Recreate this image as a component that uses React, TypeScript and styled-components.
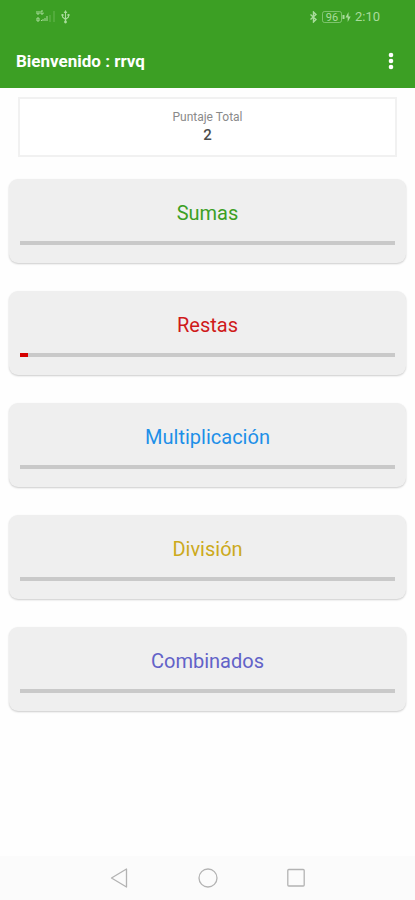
import React from 'react';
import styled, { createGlobalStyle } from 'styled-components';

const GlobalStyle = createGlobalStyle`
  *, *::before, *::after {
    box-sizing: border-box;
  }
  body {
    margin: 0;
    background: #fefefe;
    font-family: Roboto, "Liberation Sans", sans-serif;
  }
  h1, h2, p {
    margin: 0;
  }
`;

const Screen = styled.div`
  min-height: 100vh;
  display: flex;
  flex-direction: column;
`;

const Header = styled.header`
  background: #3c9f24;
  color: #ffffff;
`;

const StatusBar = styled.div`
  height: 34px;
  padding: 0 35px 0 36px;
  display: flex;
  align-items: center;
  justify-content: space-between;
  color: #a9dc9c;
`;

const StatusGroup = styled.div`
  display: flex;
  align-items: center;
  gap: 4px;
`;

const Clock = styled.time`
  font-size: 13px;
  line-height: 16px;
`;

const AppBar = styled.div`
  height: 54px;
  padding: 0 8px 0 16px;
  display: flex;
  align-items: center;
  justify-content: space-between;
`;

const Title = styled.h1`
  font-size: 17px;
  line-height: 24px;
  font-weight: 700;
`;

const IconButton = styled.button`
  width: 32px;
  height: 40px;
  padding: 0;
  border: 0;
  background: none;
  color: inherit;
  display: grid;
  place-items: center;
  cursor: pointer;
`;

const Main = styled.main`
  flex: 1;
  padding: 9px 9px 24px;
  display: flex;
  flex-direction: column;
  gap: 22px;
`;

const ScoreBox = styled.section`
  margin: 0 9px;
  padding: 10px 0;
  border: 2px solid #f1f1f1;
  background: #ffffff;
  text-align: center;
`;

const ScoreLabel = styled.p`
  font-size: 12px;
  line-height: 16px;
  color: #8a8a8a;
`;

const ScoreValue = styled.p`
  font-size: 15px;
  line-height: 20px;
  font-weight: 500;
  color: #4c4c4c;
`;

const CardList = styled.div`
  display: grid;
  gap: 28px;
`;

const Card = styled.a`
  display: flex;
  flex-direction: column;
  gap: 15px;
  padding: 21px 11px 18px;
  border-radius: 9px;
  background: #efefef;
  box-shadow: 0 1px 2px rgba(0, 0, 0, 0.2);
  text-decoration: none;
`;

const CardTitle = styled.h2<{ $color: string }>`
  font-size: 20px;
  line-height: 26px;
  font-weight: 400;
  text-align: center;
  color: ${({ $color }) => $color};
`;

const Progress = styled.progress<{ $color: string }>`
  appearance: none;
  display: block;
  width: 100%;
  height: 4px;
  border: 0;
  background: #c9c9c9;

  &::-webkit-progress-bar {
    background: #c9c9c9;
  }
  &::-webkit-progress-value {
    background: ${({ $color }) => $color};
  }
  &::-moz-progress-bar {
    background: ${({ $color }) => $color};
  }
`;

const NavBar = styled.nav`
  height: 44px;
  display: flex;
  align-items: center;
  justify-content: center;
  gap: 56px;
  background: #fbfbfb;
  color: #b3b3b3;
`;

const topics = [
  { id: 'sumas', name: 'Sumas', color: '#3c9f24', bar: '#3c9f24', value: 0 },
  { id: 'restas', name: 'Restas', color: '#cf1a1a', bar: '#d50000', value: 2 },
  { id: 'multiplicacion', name: 'Multiplicación', color: '#1e8fe8', bar: '#1e8fe8', value: 0 },
  { id: 'division', name: 'División', color: '#ccaa1c', bar: '#ccaa1c', value: 0 },
  { id: 'combinados', name: 'Combinados', color: '#6262c8', bar: '#6262c8', value: 0 },
];

const SignalIcon = () => (
  <svg width="21" height="14" viewBox="0 0 21 14" fill="none" stroke="currentColor" aria-hidden="true">
    <path d="M1 1v3h2V1M7 1H5v3h2V2.500" />
    <path d="M1 8h2v3H1zM5 10.500h1M7 11V9M9 11V8M11 11V6" />
    <path d="M14 12V5M18 12V1" opacity="0.4" />
  </svg>
);

const UsbIcon = () => (
  <svg width="9" height="14" viewBox="0 0 9 14" fill="none" stroke="currentColor" strokeWidth="1.100" aria-hidden="true">
    <path d="M4.500 2v9M1.500 5v2l3 2.500L7.500 7V5" />
    <path d="M4.500 0L2.700 3h3.600z" fill="currentColor" stroke="none" />
    <circle cx="4.500" cy="12" r="1.400" fill="currentColor" stroke="none" />
    <path d="M.5 4h2v2h-2zM6.500 4h2v2h-2z" fill="currentColor" stroke="none" />
  </svg>
);

const BluetoothIcon = () => (
  <svg width="9" height="12" viewBox="0 0 9 12" fill="none" stroke="currentColor" strokeWidth="1.400" aria-hidden="true">
    <path d="M1.500 3.500l5.500 5L4.500 11V1L7 3.500l-5.500 5" />
  </svg>
);

const BatteryIcon = () => (
  <svg width="29" height="12" viewBox="0 0 29 12" fill="none" stroke="currentColor" role="img" aria-label="96">
    <rect x="0.500" y="0.500" width="19" height="11" rx="2" opacity="0.6" />
    <path d="M21.500 4v4" strokeWidth="2" />
    <path d="M26.500 1l-3 5.500h2.200V11l3-5.500h-2.200z" fill="currentColor" stroke="none" />
    <text x="10" y="10" textAnchor="middle" fontSize="11" fill="currentColor" stroke="none">
      96
    </text>
  </svg>
);

const MoreIcon = () => (
  <svg width="6" height="20" viewBox="0 0 6 20" fill="currentColor" aria-hidden="true">
    <circle cx="3" cy="4" r="2.300" />
    <circle cx="3" cy="10" r="2.300" />
    <circle cx="3" cy="16" r="2.300" />
  </svg>
);

const BackIcon = () => (
  <svg width="20" height="20" viewBox="0 0 20 20" fill="none" stroke="currentColor" strokeWidth="1.300" strokeLinejoin="round" aria-hidden="true">
    <path d="M1.500 10l15-9v18z" />
  </svg>
);

const HomeIcon = () => (
  <svg width="20" height="20" viewBox="0 0 20 20" fill="none" stroke="currentColor" strokeWidth="1.300" aria-hidden="true">
    <circle cx="10" cy="10" r="9" />
  </svg>
);

const RecentsIcon = () => (
  <svg width="20" height="20" viewBox="0 0 20 20" fill="none" stroke="currentColor" strokeWidth="1.300" aria-hidden="true">
    <rect x="1.800" y="1.500" width="16.400" height="16.500" rx="1" />
  </svg>
);

export default function App() {
  return (
    <Screen>
      <GlobalStyle />
      <Header>
        <StatusBar>
          <StatusGroup>
            <SignalIcon />
            <UsbIcon />
          </StatusGroup>
          <StatusGroup>
            <BluetoothIcon />
            <BatteryIcon />
            <Clock>2:10</Clock>
          </StatusGroup>
        </StatusBar>
        <AppBar>
          <Title>Bienvenido : rrvq</Title>
          <IconButton type="button" aria-label="Más opciones">
            <MoreIcon />
          </IconButton>
        </AppBar>
      </Header>
      <Main>
        <ScoreBox>
          <ScoreLabel>Puntaje Total</ScoreLabel>
          <ScoreValue>2</ScoreValue>
        </ScoreBox>
        <CardList>
          {topics.map((topic) => (
            <Card key={topic.id} href={`#${topic.id}`}>
              <CardTitle id={`titulo-${topic.id}`} $color={topic.color}>
                {topic.name}
              </CardTitle>
              <Progress
                aria-labelledby={`titulo-${topic.id}`}
                max={100}
                value={topic.value}
                $color={topic.bar}
              />
            </Card>
          ))}
        </CardList>
      </Main>
      <NavBar>
        <IconButton type="button" aria-label="Atrás">
          <BackIcon />
        </IconButton>
        <IconButton type="button" aria-label="Inicio">
          <HomeIcon />
        </IconButton>
        <IconButton type="button" aria-label="Recientes">
          <RecentsIcon />
        </IconButton>
      </NavBar>
    </Screen>
  );
}
